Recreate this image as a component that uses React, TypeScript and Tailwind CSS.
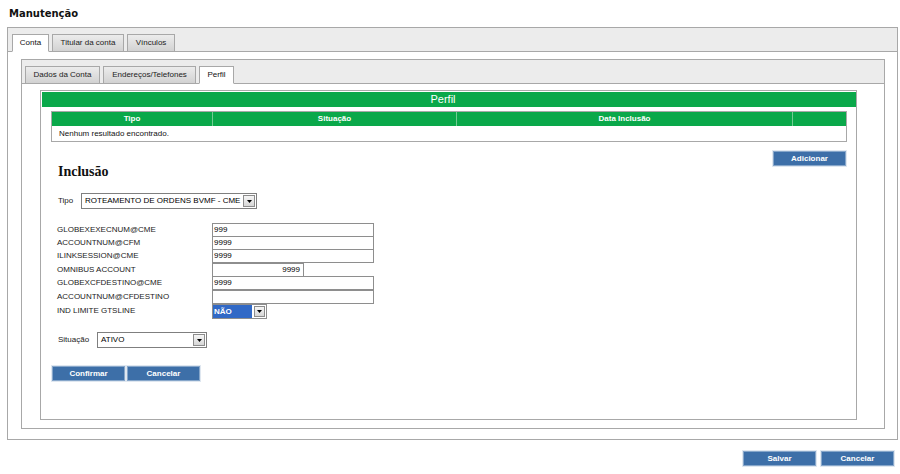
import React from "react";

const Arrow = ({ box }: { box: string }) => (
  <div className={box}>
    <svg width="5" height="3" viewBox="0 0 5 3">
      <path d="M0 0h5L2.5 3z" fill="#000" />
    </svg>
  </div>
);

const Btn = ({ label, cls }: { label: string; cls: string }) => (
  <div className={cls}>{label}</div>
);

const btnCls =
  "h-[15px] w-[73px] bg-[#3d6fa8] border border-[#86a6ca] shadow-[0_0_0_1px_#dfe7f0] text-white font-bold text-[8px] leading-none flex items-center justify-center";

const fields: { label: string; value: string; kind: "full" | "short" | "select"; h: string }[] = [
  { label: "GLOBEXEXECNUM@CME", value: "999", kind: "full", h: "h-[13px]" },
  { label: "ACCOUNTNUM@CFM", value: "9999", kind: "full", h: "h-[13px]" },
  { label: "ILINKSESSION@CME", value: "9999", kind: "full", h: "h-[14px]" },
  { label: "OMNIBUS ACCOUNT", value: "9999", kind: "short", h: "h-[13px]" },
  { label: "GLOBEXCFDESTINO@CME", value: "9999", kind: "full", h: "h-[14px]" },
  { label: "ACCOUNTNUM@CFDESTINO", value: "", kind: "full", h: "h-[14px]" },
  { label: "IND LIMITE GTSLINE", value: "NÃO", kind: "select", h: "h-[15px]" },
];

export default function App() {
  return (
    <div className="w-[900px] h-[474px] bg-white font-['Liberation_Sans',Arial,sans-serif] text-[8px] text-black overflow-hidden">
      <div className="h-[27px] pl-[9px] pt-[8px] font-['DejaVu_Sans',Verdana,sans-serif] font-bold text-[10px] leading-[12px] text-[#111]">
        Manutenção
      </div>

      {/* Outer box */}
      <div className="ml-[7px] w-[891px] h-[413px] border border-[#a8a8a8] flex flex-col">
        <div className="h-[24px] shrink-0 bg-[#ececec] border-b border-[#a8a8a8] flex items-end gap-[3px] pl-[4px]">
          <div className="w-[37px] h-[18px] -mb-px bg-white border border-[#a8a8a8] border-b-white flex items-center justify-center text-[#111]">
            Conta
          </div>
          <div className="w-[72px] h-[18px] -mb-px bg-gradient-to-b from-[#ececec] to-[#d2d2d2] border border-[#a8a8a8] flex items-center justify-center text-[#222]">
            Titular da conta
          </div>
          <div className="w-[48px] h-[18px] -mb-px bg-gradient-to-b from-[#ececec] to-[#d2d2d2] border border-[#a8a8a8] flex items-center justify-center text-[#222]">
            Vínculos
          </div>
        </div>

        <div className="pt-[7px] pl-[13px]">
          {/* Inner box */}
          <div className="w-[864px] h-[370px] border border-[#a8a8a8] flex flex-col">
            <div className="h-[24px] shrink-0 bg-[#ececec] border-b border-[#a8a8a8] flex items-end gap-[3px] pl-[3px]">
              <div className="w-[75px] h-[18px] -mb-px bg-gradient-to-b from-[#ececec] to-[#d2d2d2] border border-[#a8a8a8] flex items-center justify-center text-[#222]">
                Dados da Conta
              </div>
              <div className="w-[93px] h-[18px] -mb-px bg-gradient-to-b from-[#ececec] to-[#d2d2d2] border border-[#a8a8a8] flex items-center justify-center text-[#222]">
                Endereços/Telefones
              </div>
              <div className="w-[35px] h-[18px] -mb-px bg-white border border-[#a8a8a8] border-b-white flex items-center justify-center text-[#111]">
                Perfil
              </div>
            </div>

            <div className="pt-[6px] pl-[18px]">
              {/* Innermost box */}
              <div className="w-[817px] h-[330px] border border-[#a8a8a8] flex flex-col">
                <div className="mt-[1px] ml-[1px] h-[15px] bg-[#0aa84a] text-white text-[11px] leading-none flex items-center justify-center">
                  <span className="-ml-[12px]">Perfil</span>
                </div>

                {/* Table */}
                <div className="mt-[4px] ml-[10px] w-[796px] border border-[#a8a8a8]">
                  <div className="h-[14px] bg-[#0aa84a] flex text-white font-bold text-[8px]">
                    <div className="w-[161px] border-r border-[#72cc92] flex items-center justify-center">Tipo</div>
                    <div className="w-[244px] border-r border-[#72cc92] flex items-center justify-center">Situação</div>
                    <div className="w-[336px] border-r border-[#72cc92] flex items-center justify-center">Data Inclusão</div>
                    <div className="flex-1" />
                  </div>
                  <div className="h-[15px] flex items-center pl-[7px] text-[#111]">
                    Nenhum resultado encontrado.
                  </div>
                </div>

                <div className="mt-[9px] flex justify-end mr-[10px]">
                  <Btn label="Adicionar" cls={btnCls} />
                </div>

                <div className="ml-[17px] font-['Liberation_Serif',serif] font-bold text-[14px] leading-[12px] text-[#111]">
                  Inclusão
                </div>

                {/* Tipo */}
                <div className="mt-[15px] ml-[17px] flex items-center text-[#222]">
                  <div className="w-[23px]">Tipo</div>
                  <div className="w-[176px] h-[16px] border border-[#7f7f7f] bg-white flex items-center justify-between pl-[3px] pr-[1px]">
                    <span className="text-black">ROTEAMENTO DE ORDENS BVMF - CME</span>
                    <Arrow box="w-[12px] h-[12px] border border-[#8c8c8c] bg-gradient-to-b from-[#f6f6f6] to-[#d6d6d6] flex items-center justify-center" />
                  </div>
                </div>

                {/* Fields */}
                <div className="mt-[14px] ml-[16px] flex flex-col">
                  {fields.map((f) => (
                    <div key={f.label} className={`${f.h} flex items-start`}>
                      <div className="w-[155px] h-[14px] flex items-center text-[#222]">{f.label}</div>
                      {f.kind === "full" && (
                        <div className="w-[162px] h-[14px] border border-[#8e8e8e] bg-white flex items-center pl-[1px] text-black">
                          {f.value}
                        </div>
                      )}
                      {f.kind === "short" && (
                        <div className="w-[92px] h-[14px] border border-[#8e8e8e] bg-white flex items-center justify-end pr-[3px] text-black">
                          {f.value}
                        </div>
                      )}
                      {f.kind === "select" && (
                        <div className="w-[55px] h-[15px] border border-[#8e8e8e] bg-white flex items-center">
                          <div className="w-[39px] h-[13px] bg-[#3169c6] text-white font-bold flex items-center pl-[1px]">
                            {f.value}
                          </div>
                          <div className="flex-1 flex justify-end pr-[1px]">
                            <Arrow box="w-[11px] h-[11px] border border-[#8c8c8c] bg-gradient-to-b from-[#f6f6f6] to-[#d6d6d6] flex items-center justify-center" />
                          </div>
                        </div>
                      )}
                    </div>
                  ))}
                </div>

                {/* Situação */}
                <div className="mt-[13px] ml-[17px] flex items-center text-[#222]">
                  <div className="w-[39px]">Situação</div>
                  <div className="w-[110px] h-[16px] border border-[#7f7f7f] bg-white flex items-center justify-between pl-[3px] pr-[1px]">
                    <span className="text-black">ATIVO</span>
                    <Arrow box="w-[12px] h-[12px] border border-[#8c8c8c] bg-gradient-to-b from-[#f6f6f6] to-[#d6d6d6] flex items-center justify-center" />
                  </div>
                </div>

                <div className="mt-[18px] ml-[11px] flex gap-[2px]">
                  <Btn label="Confirmar" cls={btnCls} />
                  <Btn label="Cancelar" cls={btnCls} />
                </div>
              </div>
            </div>
          </div>
        </div>
      </div>

      <div className="mt-[11px] flex justify-end gap-[5px] pr-[6px]">
        <Btn label="Salvar" cls={btnCls} />
        <Btn label="Cancelar" cls={btnCls} />
      </div>
    </div>
  );
}
